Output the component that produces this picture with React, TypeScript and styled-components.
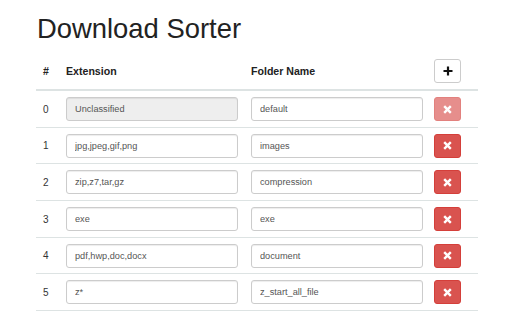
import React from 'react';
import styled, { createGlobalStyle } from 'styled-components';

const GlobalStyle = createGlobalStyle`
  body {
    margin: 0;
    background: #fff;
    font-family: "Liberation Sans", Arial, sans-serif;
    color: #333;
  }
`;

const Page = styled.div`
  width: 512px;
  height: 320px;
  padding: 14px 34px 0 36px;
  box-sizing: border-box;
  overflow: hidden;
`;

const Title = styled.h1`
  margin: 0 0 9px 1px;
  font-size: 27.4px;
  line-height: 30px;
  font-weight: 400;
  color: #222;
`;

const Table = styled.div`
  display: flex;
  flex-direction: column;
  width: 442px;
`;

const Row = styled.div<{ $head?: boolean }>`
  display: grid;
  grid-template-columns: 23px 185px 183px 1fr;
  align-items: center;
  padding: ${(p) => (p.$head ? '6px 0' : '6px 0 5.7px')};
  border-bottom: ${(p) => (p.$head ? '2px' : '1px')} solid #dde3e3;
`;

const Cell = styled.div`
  padding-left: 7px;
  font-size: 10px;
  color: #333;
`;

const HeadCell = styled(Cell)`
  font-size: 10.6px;
  font-weight: 700;
  color: #222;
`;

const Field = styled.input`
  width: 172px;
  height: 24px;
  box-sizing: border-box;
  border: 1px solid #ccc;
  border-radius: 3px;
  padding: 0 8px;
  font-family: "Liberation Sans", Arial, sans-serif;
  font-size: 9.2px;
  color: #555;
  background: #fff;
  box-shadow: inset 0 1px 1px rgba(0, 0, 0, 0.075);
  outline: none;

  &:disabled {
    background: #eee;
  }
`;

const IconButton = styled.button<{ $danger?: boolean; $off?: boolean }>`
  width: 27px;
  height: 24px;
  padding: 0;
  display: flex;
  align-items: center;
  justify-content: center;
  border-radius: 3px;
  border: 1px solid ${(p) => (p.$danger ? '#d43f3a' : '#ccc')};
  background: ${(p) => (p.$danger ? '#d9534f' : '#fff')};
  opacity: ${(p) => (p.$off ? 0.65 : 1)};
  cursor: pointer;
`;

const PlusIcon = () => (
  <svg width="10" height="10" viewBox="0 0 10 10">
    <path d="M5 0.5v9M0.5 5h9" stroke="#111" strokeWidth="2.2" />
  </svg>
);

const RemoveIcon = () => (
  <svg width="9" height="9" viewBox="0 0 9 9">
    <path d="M1.2 1.2l6.6 6.6M7.8 1.2l-6.6 6.6" stroke="#fff" strokeWidth="2.4" />
  </svg>
);

const rules = [
  { ext: 'Unclassified', folder: 'default' },
  { ext: 'jpg,jpeg,gif,png', folder: 'images' },
  { ext: 'zip,z7,tar,gz', folder: 'compression' },
  { ext: 'exe', folder: 'exe' },
  { ext: 'pdf,hwp,doc,docx', folder: 'document' },
  { ext: 'z*', folder: 'z_start_all_file' },
];

export default function App() {
  return (
    <Page>
      <GlobalStyle />
      <Title>Download Sorter</Title>
      <Table>
        <Row $head>
          <HeadCell>#</HeadCell>
          <HeadCell>Extension</HeadCell>
          <HeadCell>Folder Name</HeadCell>
          <Cell>
            <IconButton>
              <PlusIcon />
            </IconButton>
          </Cell>
        </Row>
        {rules.map((r, i) => (
          <Row key={i}>
            <Cell>{i}</Cell>
            <Cell>
              <Field defaultValue={r.ext} disabled={i === 0} />
            </Cell>
            <Cell>
              <Field defaultValue={r.folder} />
            </Cell>
            <Cell>
              <IconButton $danger $off={i === 0}>
                <RemoveIcon />
              </IconButton>
            </Cell>
          </Row>
        ))}
      </Table>
    </Page>
  );
}
